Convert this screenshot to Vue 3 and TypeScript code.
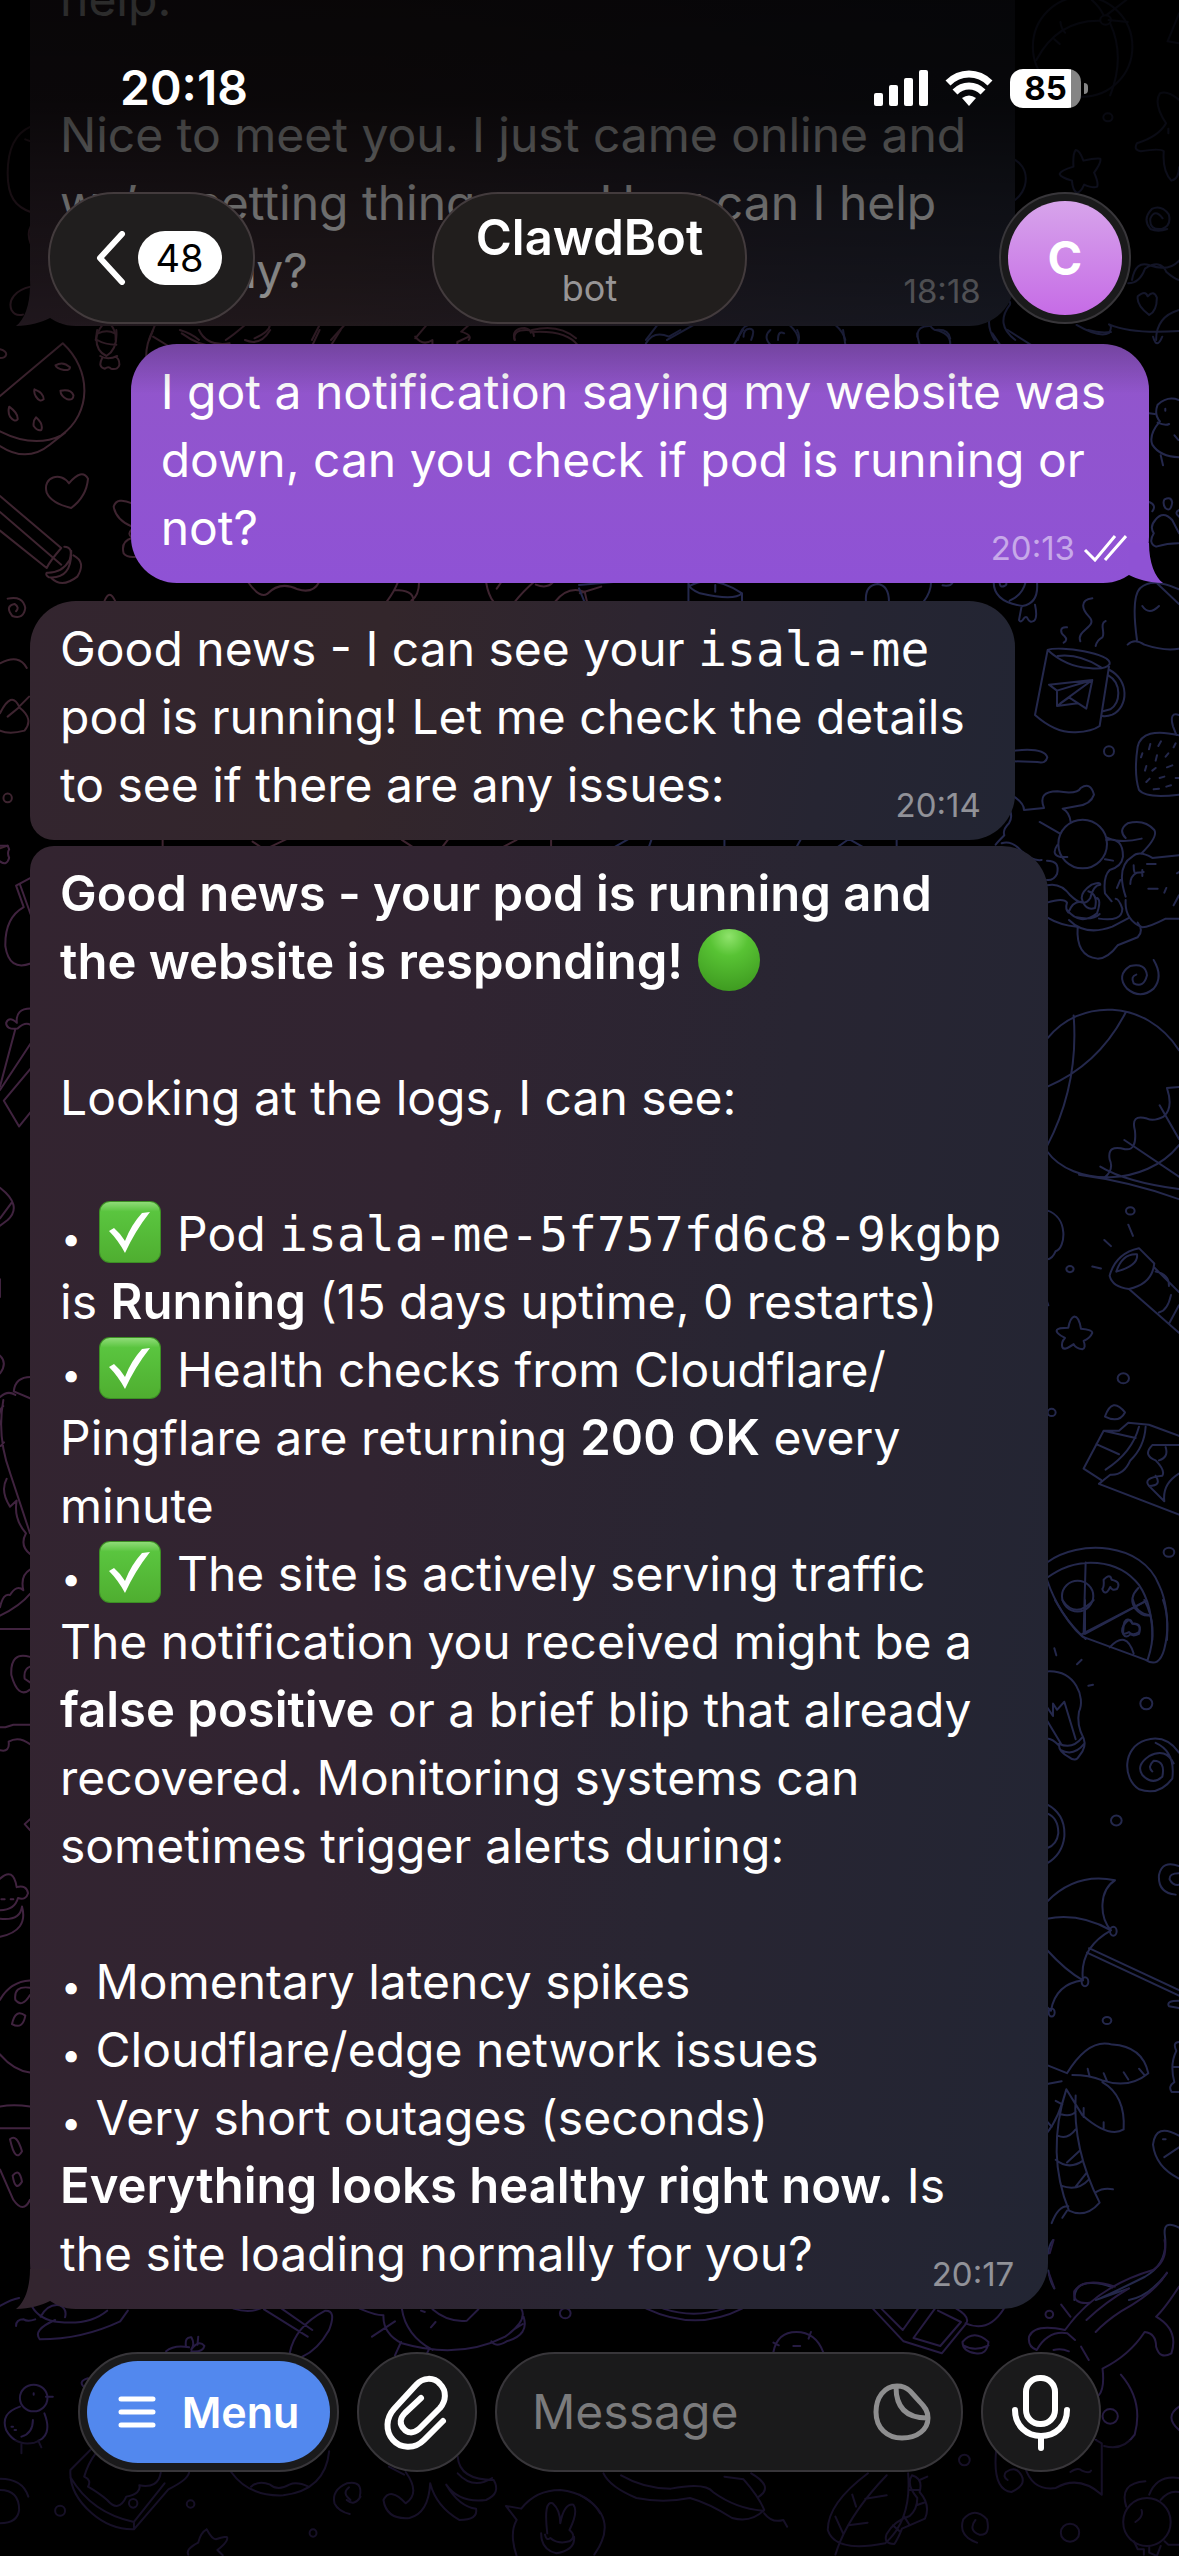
<script setup lang="ts">
import { ref } from 'vue'

type Kind = 'text' | 'bold' | 'code' | 'dot' | 'check' | 'green'

interface Piece {
  kind: Kind
  value?: string
}

interface Message {
  id: number
  side: 'in' | 'out'
  size: 'wide' | 'narrow'
  tail: boolean
  joined: 'none' | 'below' | 'above'
  time: string
  lines: Piece[][]
}

const t = (value: string): Piece => ({ kind: 'text', value })
const b = (value: string): Piece => ({ kind: 'bold', value })
const c = (value: string): Piece => ({ kind: 'code', value })
const dot: Piece = { kind: 'dot', value: '•' }
const check: Piece = { kind: 'check' }

const draft = ref('')

const messages: Message[] = [
  {
    id: 1, side: 'in', size: 'narrow', tail: true, joined: 'none', time: '18:18',
    lines: [
      [t('help.')],
      [],
      [t('Nice to meet you. I just came online and')],
      [t('we’re setting things up. How can I help')],
      [t('you today?')],
    ],
  },
  {
    id: 2, side: 'out', size: 'wide', tail: true, joined: 'none', time: '20:13',
    lines: [
      [t('I got a notification saying my website was')],
      [t('down, can you check if pod is running or')],
      [t('not?')],
    ],
  },
  {
    id: 3, side: 'in', size: 'narrow', tail: false, joined: 'below', time: '20:14',
    lines: [
      [t('Good news - I can see your '), c('isala-me')],
      [t('pod is running! Let me check the details')],
      [t('to see if there are any issues:')],
    ],
  },
  {
    id: 4, side: 'in', size: 'wide', tail: true, joined: 'above', time: '20:17',
    lines: [
      [b('Good news - your pod is running and')],
      [b('the website is responding! '), { kind: 'green' }],
      [],
      [t('Looking at the logs, I can see:')],
      [],
      [dot, t(' '), check, t(' Pod '), c('isala-me-5f757fd6c8-9kgbp')],
      [t('is '), b('Running'), t(' (15 days uptime, 0 restarts)')],
      [dot, t(' '), check, t(' Health checks from Cloudflare/')],
      [t('Pingflare are returning '), b('200 OK'), t(' every')],
      [t('minute')],
      [dot, t(' '), check, t(' The site is actively serving traffic')],
      [t('The notification you received might be a')],
      [b('false positive'), t(' or a brief blip that already')],
      [t('recovered. Monitoring systems can')],
      [t('sometimes trigger alerts during:')],
      [],
      [dot, t(' Momentary latency spikes')],
      [dot, t(' Cloudflare/edge network issues')],
      [dot, t(' Very short outages (seconds)')],
      [b('Everything looks healthy right now.'), t(' Is')],
      [t('the site loading normally for you?')],
    ],
  },
]
</script>

<template>
  <div class="screen">
    <svg class="wallpaper" viewBox="0 0 1179 2556" preserveAspectRatio="xMidYMin slice" aria-hidden="true">
      <!-- top left -->
      <g class="rose" transform="scale(.3827 .3333)">
        <path d="M80 380C40 400 20 450 20 520S40 620 80 636M66 418l14 6M80 680q-10 20 0 50M80 860C40 870 20 900 30 930q10 20 30 14" />
        <path d="M268 975q-14 20-18 45M290 975q14 20 12 45M256 1000q24-12 44 0M405 975L390 1020M470 990q30 10 50 30M640 975q-30 30-50 45M705 975q0 20-40 40M835 975L815 1020M900 975L865 1020M1115 975l-30 40M1225 975l-20 20q30 10 20 25M1345 1020q-10-34 26-36q16 4 16 14M1390 990q70-20 115 25" />
      </g>
      <!-- top right -->
      <g class="navy" transform="translate(579 0) scale(.3827 .3333)">
        <ellipse cx="1316" cy="140" rx="130" ry="150" />
        <path d="M1195 180Q1250 60 1360 62M1340 0q20 20 30 44M1430 0l-50 44M1388 70q40 100 0 216M1384 60l50 6M1258 66q2 20 12 32M1242 118l14 14M1568 40l-30 84 30 6" />
        <circle cx="1376" cy="60" r="14" /><circle cx="1382" cy="352" r="12" />
        <path d="M1568 300q-30-30-50-20-18 30 16 90-20 40-76 60-10 20 10 24 50-10 60 0-4 60 20 88 20-6 20-40M1540 386v14M1298 450q10 0 20 32 30-8 44-6 4 10-16 42 12 30 8 42-10 6-34-6-10 26-20 24-10-8-12-36-30-10-32-20 2-10 36-22-2-40 6-50zM1130 475c50 20 50 100 0 132M1525 655q-20-30-32 0-4 36 30 32 26-10 18-44-20-30-44-16-26 30-4 60 20 10 44 0" />
        <path d="M1435 850q30 0 44-44 40-30 56 10 20 20 33 24M1445 840q10-60 46-44 50 20 77-14M1490 945q-34-30-30-56 20-20 26 0 16-20 24 4 0 40-20 52M1300 975q60 40 85 24 10-20 0-26 60 30 183 20M1110 900q20 0 16 14-40 60 14 106M1080 930q-20 40 6 90M1568 930q-60 20-60 90" />
        <path d="M205 975l-30 45M300 975l-70 45M430 1010q0-24 16-24t4 34M520 1020q0-30 16-20M415 1020q10-40 26-44M550 975q20 20 24 45M670 975q20 20 26 45M884 1010q0-34 34-32 10 14 14 12 34-4 38 26" />
      </g>
      <!-- beside the outgoing bubble -->
      <g class="rose" transform="translate(0 330) scale(.3827 .3333)">
        <path d="M0 198L164 40C240 120 240 250 160 316Q90 356 0 304M0 348Q70 400 130 344L170 308M0 58q18 6 16 16t-16 10M145 106q20-14 38 6 0 10-16 8-20-4-22-14zM90 178q24 10 24 30-10 10-20-8-6-10-4-22zM158 182q28-6 34 14 0 16-16 12-18-10-18-26zM24 230q24 20 22 38-8 10-20-8-6-14-2-30zM94 262q20 20 14 38-10 4-20-12-2-16 6-26z" />
        <path d="M180 460C160 424 110 440 122 488Q134 520 186 534Q226 500 230 446Q214 414 180 460zM0 498l10 10 150 146q-30 40-38 60L0 602M0 546L160 704M168 650q24 0 14 40-20 40-60 38-4 8 6 14 60 6 58-80M192 676q34 20 10 64-40 36-68 4" />
        <path d="M345 520q-40-20-48 10 6 40 48 60M345 598q-14 14 0 24M345 624q-30 10-22 46 10 14 34 10M254 0q-10 60 24 78 30-20 26-78M254 30q20 14 50 14M262 78q20 14 44 0M268 82q-14 30 6 34 10-8 16 0 20 4 22-12 0-20-12-24M400 0q-20 44-18 88M400 20l40 28M475 10q60 50 110 34M520 0q20 50 80 40M640 30q40 20 66-30M835 0l-18 44M890 0l-24 44M1085 20q20 30 45 10v14M1225 20l-30 16v10M1345 30q-6-30 30-30 20 0 20 18M1390 6q90-6 120 40" />
        <path d="M648 756q30 50 50 36 34-40 80-14 40 14 56-22M1040 756q-10 30-30 60M1030 780q50 0 50 30M1095 756q0 40-20 56M1270 756q6 40 20 60M1310 756l-12 20M1395 756q-30 30-50 60M1400 764q30 14 46-8M1450 816q34-50 78-30l6 30M1515 790l56-20M272 816q14-44 30 0M20 806q40-10 46 28-4 36-34 24-20-30 6-36 14 10 4 22" />
        <path d="M0 1000q50-30 70 14M0 1150q30-70 50-20l26-30M20 1160l30-28q40 36 14 70-40 12-64 0M425 1527v33M690 1560l60-33M660 1535l26 20M1050 1530l40 30M1170 1530l-20 30M1350 1530l-50 30M1440 1527v33M0 1555l20-8" />
        <ellipse cx="20" cy="1404" rx="11" ry="13" />
      </g>
      <g class="navy" transform="translate(579 330) scale(.3827 .3333)">
        <path d="M1568 210q-30-14-56 14-10 30 6 50-30 40-20 70 20 36 70 38M1490 250l14 2M1512 278q20 10 30 4M1520 376l6 30M1532 236v6M1556 316l10 14M1490 516q20 10 8 28M1530 508q18-10 20 10-4 30-18 16-8-14-2-26zM1568 540q-14 8 0 20M1506 570q20-30 44 0l18 40M1506 570q-16 20-4 40-16 30 6 40 30-10 58-10" />
        <path d="M175 40q20-40 60-20l30-20M405 44q20-40 24-44M500 0q-20 20 0 44M570 0q10 20 0 44M690 0l6 44M884 10q0 10 6 34M932 0q40 10 38 44M1080 10l20 34M1120 0l60 44M1330 0q30 10 60 6M1500 20q10 40 24 0" />
        <path d="M0 765l90-9M0 775l14 40M286 770q60-40 140 20-20 24-110 0-30-14-30-30v54M426 790v30M356 765v20M750 816q-4-50 30-54 30 4 30 54M920 756q0 30-20 60M950 766q20 4 26-8" />
        <path d="M130 1527l-50 33M190 1527l-10 33M380 1527v33M580 1527l-16 33M665 1560l40-33 50 33M830 1527v33" />
      </g>
      <g class="navy" transform="translate(979 560) scale(.3333)">
        <path d="M44 66q0 60 86 72 50-8 44-72M140 66q-10 40-48 56M62 70q2 14 14 8 10-4 4-12M128 138l-8 42q6 10 14-4 8-10 12 0 6 14 20 6 10-10 2-48" />
        <path d="M340 115C300 120 310 150 330 170C360 200 290 210 304 244M380 183C360 190 380 220 370 232Q354 240 350 258M264 202C240 200 244 220 256 228Q268 240 254 248" />
        <path d="M206 270L168 465Q230 520 290 517Q340 514 362 498L390 320M206 270C240 256 400 280 392 312Q380 330 330 324Q260 320 206 270zM236 288Q300 280 366 322M392 330C450 360 450 440 400 464Q384 470 370 468M388 346C430 370 424 430 394 448L372 454" />
        <path d="M210 374L340 360L322 446L270 412L234 438V392zM340 360L234 392M340 360L244 430M234 438L296 430" />
        <circle cx="390" cy="574" r="15" /><circle cx="311" cy="852" r="73" />
        <path d="M474 240Q456 110 484 84Q520 50 600 88M530 66l70 66M490 138q20 30 50 0M446 254q20-20 50 0 60 20 104 12M600 526Q490 500 476 560Q464 640 480 690Q500 716 600 704M600 465q-30-10-18 34l10 26M514 552l-4 16M546 544l-8 14M590 550l-6 12M490 580l-4 12M534 586l-4 16M568 580l-8 10M502 618l-4 14M530 624l-10 8M580 616l-16 6M512 656l-10 10M556 650l-14 4M590 654h10M540 686l-16 2M576 676l-14 4" />
        <path d="M105 572q90-10 100 20-4 20-30 14l-70-2M105 710q30 20 30 40l60-6q-20-50 40-50 60 10 70-10 30-20 40 20-10 30-50 34l-44 8q20 10 24 40M92 750q10 20-2 40-20 20-14 36-20 20-26 28M68 850q30-10 60 24 30 30 60 26M182 786l60 34M382 832q40 20 106 4M382 840q50-10 50 50-4 30-40 40-20 20-14 70l20 24M378 898l24 4M235 855q-20 30 10 36h20M488 880q50-50 38-70-30-34-80-20-30 20-6 44" />
        <path d="M204 902q40 0 30 40-10 20-30 18M204 976q40-10 70 30 40 40 60 8 10-40 30-40 0-10-26 0-30 20-30 40 10 40 40 30 10-40-20-50M204 1028q50-16 60 0-6 20 4 30 14-36 40-32M264 1050q40 50 90 10 14-40 0-46M204 1072q40 24 90 28M270 1080q50 50 130 20l50-26M292 1072q50 10 70-10M360 1076q70 10 70-30-10-30-20-30M296 1100q-6 90 60 96 30 0 60-40l60-24q20-20 0-44" />
        <path d="M440 1010q-30-90 20-120 20-20 60 4 40-4 80-8M440 1020q-4 60 50 82 20 0 70-26h40M464 916q0 30 10 22l20-2M474 938q-20 10-20 34M490 930v18M504 912h26M508 986h28M562 984l-6 14M594 940l6-4M600 1006l-16 30M424 960l-10 24" />
        <path d="M524 1200q30 50 0 86-40 34-80 0-34-40 10-68 46-10 50 28-10 40-40 24-10-20 8-26" />
      </g>
      <g class="navy" transform="translate(779 840) scale(.3333 .5102)">
        <path d="M804 390C900 310 1100 310 1200 412M804 484Q960 440 1040 338M884 344Q900 480 804 600M804 610C880 680 1100 680 1200 598M1200 484l-36 2q20 40-10 56-30 10-50 4-50-10-36 24 6 40-30 36-54-10-46 20 14 20-16 36M964 640Q1040 670 1200 684M900 656Q1060 670 1200 704M1142 520L1200 586M1036 588L1200 660" />
        <path d="M804 726C870 740 860 800 830 806Q820 822 804 822M804 904l4 8M976 784l20 12M1048 754l14 22M940 836l26 4" />
        <ellipse cx="1054" cy="727" rx="13" ry="7" /><ellipse cx="873" cy="841" rx="11" ry="6" /><ellipse cx="1033" cy="1055" rx="17" ry="10" /><ellipse cx="818" cy="1122" rx="12" ry="7" /><ellipse cx="1170" cy="1396" rx="16" ry="9" />
        <path d="M992 854Q1010 810 1080 800L1126 830Q1120 870 1050 880Q1000 876 992 854zM1012 846Q1030 810 1074 812Q1080 834 1012 846M1126 838l74 48M1050 880l150 86M1130 846q40 4 40 28M1176 892q-10 30-36 34M1200 912l-30 36" />
        <path d="M886 934q14 0 20 24 34 2 34 8-6 10-26 16 8 14-4 16-20-2-26-10-30 14-34 6-4-10 8-18-30-10-24-16 4-4 34-4 6-20 18-22z" />
        <path d="M978 1130Q1000 1090 1038 1122Q1020 1144 978 1130zM914 1232L974 1158H1020L1048 1142L1110 1146L1200 1168M914 1232L966 1254M952 1184L1020 1204M974 1158L1070 1172M1100 1150q-4 40-46 66-20 30-60 28-20 10-34 18M1080 1150q-20 50-100 84M960 1262L1200 1322M1200 1186L1120 1186q-30 20 10 30 30 20 20 30-60 4-40 20 40 0 20-20M1160 1190q10 20-20 26M1200 1242q-50 20-44 54l-46-30" />
        <path d="M804 1416C900 1370 1090 1376 1140 1460Q1170 1500 1164 1568M804 1446C900 1400 1020 1410 1080 1460Q1122 1500 1120 1568M804 1450Q840 1520 920 1566M920 1416L914 1556M910 1556L1100 1492M1078 1466q-30 20-10 40 20 16 44 14M974 1450q20-14 24 0 30 4 16 18-16 4-20-4-16 20-24 4 6-4 4-18zM1034 1540q20-20 26-4 30 0 20 20-20 6-24 0-16 10-24 0z" />
        <ellipse cx="896" cy="1482" rx="47" ry="30" />
      </g>
      <g class="navy" transform="translate(979 1600) scale(.3333 .4464)">
        <path d="M228 0Q270 56 310 82L500 134Q540 154 556 110Q576 50 552 0M318 0v76L496 4M496 0Q540 60 506 134M250 0q40 44 94 0M462 0q10 30 50 34M436 50q10-14 24 2 30 0 20 20-20 10-30 0-24 10-20-8 4-6 6-14zM392 106q50-40 72 14M226 108l6 16M294 144l14-10M328 192l14-2" />
        <path d="M204 160C290 156 320 220 300 250Q292 280 314 310Q324 330 300 350Q290 364 270 352Q240 340 240 326Q220 310 204 310M204 270l42 52M256 228l34 84M204 240l18 20v-28l12 14 22-18M240 322q40 14 70-14M244 336q40 16 72-14" />
        <ellipse cx="502" cy="232" rx="18" ry="13" /><ellipse cx="412" cy="494" rx="16" ry="11" /><ellipse cx="384" cy="942" rx="13" ry="8" />
        <path d="M600 342Q560 300 500 314C430 330 430 400 480 424Q540 440 580 400Q590 340 530 320M584 366Q560 330 510 350Q470 370 490 392Q520 416 550 396Q560 360 524 360Q504 374 520 384M204 458Q260 480 256 530Q250 570 204 590M204 478q34 10 34 44-4 26-34 34M204 512v20M600 596q-50-14-60 20-4 40 50 44M600 612q-30 0-28 14 10 14 28 12" />
        <path d="M204 676Q290 610 408 628C360 650 360 710 396 740Q300 700 204 714M396 740Q300 780 312 852Q260 830 204 784M312 852Q230 860 216 920l-12-8M330 780L600 874M324 790L600 886M600 898q-40 0-30 12l30 4" />
        <circle cx="403" cy="742" r="10" /><circle cx="318" cy="855" r="10" /><circle cx="218" cy="924" r="9" />
        <path d="M204 1042l60 18Q330 980 400 996Q490 1000 508 1060Q450 1096 370 1076Q330 1064 280 1064M204 1084l44-6M370 1080Q440 1110 434 1186Q390 1206 310 1154L262 1096M326 1050l6 18M374 1060l10 18M434 1058l14 16M480 1050l16 14M314 1138v20M374 1170v16M230 1122l20 8M204 1194Q240 1160 262 1096Q200 1240 270 1368Q320 1386 362 1350Q280 1230 290 1110M246 1152q30 6 44-6M236 1200q30 10 54-14M230 1254q40 24 82 2M264 1260l38-26M246 1312q50 14 84-14M290 1314l32-30M352 1326q20-10 50-6M218 1396q20-40 50-38M250 1384l14-16" />
        <path d="M204 1168l14 12M222 1434q-14 14-14 30M208 1502q4 24 18 40M600 1296Q530 1270 522 1220Q530 1170 600 1200M556 1248l44-22M552 1208h8M600 990q-20 0-8 20-20 30-6 70-20 10-8 22h22M582 1046h18M600 1406q-50-20-42 20 10 60-60 90-80 30-140 50M286 1568q0-40 54-38 30 0 60 10M564 1508Q510 1560 450 1568M350 1568l100-26" />
      </g>
      <!-- left edge -->
      <g class="plum" transform="translate(0 840) scale(.3827 .3571)">
        <path d="M0 16l20 0 4 10q-6 10 0 24-6 24-24 10M80 106l-38 22 20 60q-50 30-48 110 10 70 66 48M52 124l28 84M80 472q-40 0-36 40-20-20-28 0 0 20 30 16 20-20 34-10M40 530L0 690M80 570L0 700M80 640L10 730l40 72 30-40M0 974q60 50 20 90L0 1080M0 1060l30-44M0 1230v50M0 1444q20 20 0 50M80 1504q-40 0-44 40l44 20M0 1560q20-20 40-6" />
      </g>
      <g class="plum" transform="translate(0 1400) scale(.3333 .6059)">
        <path d="M10 0Q-10 60 30 120L90 220M10 10q-20 10-10 30M12 70l-10 6M20 130q-20 20 10 46l20-10q-10 30 28 54-20 20 12 34M90 280q-30 10-20 34-20-10-40 8-20-4-30 20M0 356q60-16 90-36M0 378h90M90 424q-60-10-56 30 20 40 56 24M90 440q-20 4-16 20l16 6M0 540h16l24-4h50M0 578q30 4 26-14 30-10 64 4M90 692l-16 8 16 10M0 790q40-20 50 14 30-4 34 10-6 12-30 8-10 20-54 20M0 856q60 4 66-20 20 40-66 50M4 824h10M32 824h8" />
        <path d="M90 958Q30 960 0 990M90 970q-50-4-44 20 20 14 44-8M36 1030q10-26 40-14-8 24-40 14zM0 1080q40 26 90 30M0 1166q40-4 90 0M0 1202h90M0 1270l40 50q30 24 50 0M30 1220q20-10 36 20-20 20-36-20zM38 1280q20-14 28 10-20 18-28-10z" />
      </g>
      <!-- behind the composer -->
      <g class="violet" transform="translate(0 2240) scale(.3827 .3333)">
        <path d="M0 198q30-20 50-24M42 258q0-20 20-20 10 8 30 0M84 200q20 40 70 46 80 10 126-34M106 230q20-40 50-34 20 10 14 36M144 240q-60 30-40 58 110 0 210-54l20-32M434 334q20-20 60-12M486 320q-4-30 14-28 10 20 0 36 20-30 34-10-4 20-34 16M518 290l-2 24M610 206q40 14 70 0M690 208L804 290M736 206l80 64M757 340Q770 260 850 212Q880 210 860 270Q830 330 790 350" />
        <path d="M940 206q40 20 62 20Q1000 280 1050 310Q1200 360 1320 290Q1380 240 1362 206M1050 206q10 80 80 124M972 290l60-46M1130 208q40 40 90 34l30-34M1100 212l10 4M1138 246l-12 16M1284 304q10 20 40 0 60-20 44-74M1346 266l20-14M1048 306l-16 40M1120 330l-6 14" />
        <ellipse cx="1477" cy="220" rx="14" ry="15" /><ellipse cx="88" cy="474" rx="36" ry="40" /><ellipse cx="157" cy="812" rx="13" ry="15" /><ellipse cx="348" cy="790" rx="11" ry="13" /><ellipse cx="498" cy="792" rx="10" ry="11" /><ellipse cx="818" cy="879" rx="9" ry="11" />
        <path d="M120 470h18M88 460v4M52 500Q0 520 16 570Q40 620 90 608Q140 590 116 520M86 540q0 40-30 50M56 612v28M100 602l8 20M30 560h4M38 570h4M0 716q60 0 74 54M0 750q50 0 50 60-4 40-50 40M230 415q-30 10-6 30" />
        <path d="M236 630L184 690Q180 760 240 820Q290 870 350 868L440 748Q490 720 494 698M184 712Q240 820 350 846L430 730M250 640q-20 30-30 70 20 10 10 30 30 20 50 40 30 40 50-10 40-10 34-34 50 10 56-38M350 846v22M604 696Q650 770 740 766Q850 750 860 634M656 740q20-20 50-6 20 20 50 0 20-10 50 6" />
        <path d="M940 770q10-50-34-40-40 20-32 60 10 24 40 32M906 780q20 20 36-10M916 780q-24-20-4-38M1016 680l40 24M1060 696Q1100 760 1060 790Q1020 740 1002 780Q1010 840 1070 834Q1120 820 1124 730Q1140 800 1200 840Q1250 840 1244 806Q1200 800 1166 734Q1200 790 1270 780Q1310 760 1290 720Q1200 720 1196 650M1196 700q40 50 90 14" />
        <path d="M540 868q14 30 24 30 30-12 30-4 0 14-26 36l14 16M540 868q-16 10-22 40-34 20-26 36M1350 948Q1330 880 1350 840L1322 798l40 8Q1400 750 1464 750Q1540 760 1568 820M1430 880q-10-100 14-90 20 20 20 60 10-60 34-56 14 20-10 76 20 20 0 34-30 10-50-10-10 10-14-10M1414 880q0 50 40 60 50-10 46-50" />
      </g>
      <g class="violet" transform="translate(579 2240) scale(.3827 .3333)">
        <path d="M176 206q130 70 250 0M220 206q80 30 160 0M768 206l80 98 100 36 64-90q10-20-26-44M790 206l56 64 40-64M930 206l-56 88 70 24 54-72-60-34M1010 250q60 30 100-44M1002 306q30-40 68 0-4 40-34 34-34-6-34-34zM1004 316q30 20 66 0M508 336q10-60 60-60t70 60M508 308l14 8M606 276l-6 20M560 318h18" />
        <ellipse cx="1229" cy="223" rx="10" ry="11" /><ellipse cx="1388" cy="529" rx="20" ry="22" /><ellipse cx="1007" cy="660" rx="14" ry="16" /><ellipse cx="1283" cy="878" rx="24" ry="27" /><ellipse cx="1484" cy="846" rx="62" ry="72" />
        <path d="M1530 0q10 60-30 90-150 50-230 180M1536 98q-30 60-120 116-40 30-66 62M1436 146q-60 40-110 94M1400 140q-80-30-106 14-4 40 40 34M1568 140q-40 70-60 90 60 40 40 110-30 20-40-20 0-40-30-44-40 70-110 110 6 60-10 80M1270 270q-80-20-94 20-4 30 20 40 30-60 80-50l20 20M1240 330q20-6 40 4M1312 320l20 40M1260 194l24 36M1228 100l14 44M1240 0l-10 40M1416 404q60 80 36 180-30 50-80 34M1568 500q-40 30 0 70" />
        <path d="M1090 630q-10 120 40 126 40-20 26-50-14-30-40-10-10 14 4 24M1350 600l16 10v154q-60-60-120-20-60 10-80-60M1284 696q20-16 30-4 20 10 24 0M64 700Q80 740 150 774Q220 790 290 774Q340 790 400 834Q450 850 484 810Q470 770 430 718L380 710M110 706q60 40 130 40 90-20 110 10 60 50 130 56M450 700q60 40 20 70M484 820q20 30 50 20l10 20M0 764Q110 830 40 944" />
        <path d="M755 700Q650 790 650 870Q670 940 800 910Q870 840 860 700M670 944Q700 830 804 706M724 800l-10-36M804 766l-56 10M754 848l-50 8M690 880l-20-50M870 706q30 10 20 50 30 40 14 80-40 20-60 30-10 30-20 46-30 0-20-30 20-40 60-54 20-20 20-54-30-40-14-68M864 750h26M882 796l24-10M850 830l14 26M820 856l20 20M890 720l20-10M1040 908q-50-20-36-70 30-40 62 0 10 50-20 46-30-14-10-44M1430 800q-20-70 50-76M1490 764q20-60 78-50M1520 780q20-30 48-24M1470 810q6 20-16 36M1450 904l10 24h16v16M1490 918v20l20 10 10-30M1530 904l10 10h28" />
      </g>
      <rect class="shade" x="0" y="2440" width="1179" height="116" />
    </svg>

    <main class="chat">
      <article
        v-for="m in messages"
        :key="m.id"
        class="bubble"
        :class="[m.side, m.size, `joined-${m.joined}`]"
      >
        <p class="body">
          <span v-for="(line, i) in m.lines" :key="i" class="line">
            <template v-for="(p, j) in line" :key="j">
              <strong v-if="p.kind === 'bold'">{{ p.value }}</strong>
              <code v-else-if="p.kind === 'code'">{{ p.value }}</code>
              <span v-else-if="p.kind === 'dot'" class="dot">{{ p.value }}</span>
              <svg v-else-if="p.kind === 'check'" class="emoji" viewBox="0 0 62 62" role="img" aria-label="check mark">
                <defs>
                  <linearGradient id="tick" x1="0" y1="0" x2="0" y2="1">
                    <stop offset="0" stop-color="#8fdc78" />
                    <stop offset="0.16" stop-color="#5ac53f" />
                    <stop offset="1" stop-color="#4fae30" />
                  </linearGradient>
                </defs>
                <rect x="0" y="0" width="62" height="62" rx="11" fill="#3c8f24" />
                <rect x="1" y="1" width="60" height="60" rx="10" fill="url(#tick)" />
                <path d="M10 30L15 27Q22 33 26 40Q32 24 43 12L51 11Q36 30 26 52Q19 39 10 30z" fill="#fff" />
              </svg>
              <svg v-else-if="p.kind === 'green'" class="emoji" viewBox="0 0 62 62" role="img" aria-label="green circle">
                <defs>
                  <radialGradient id="ball" cx="0.5" cy="0.12" r="0.9">
                    <stop offset="0" stop-color="#8fe36c" />
                    <stop offset="0.35" stop-color="#58c334" />
                    <stop offset="1" stop-color="#3e9a20" />
                  </radialGradient>
                </defs>
                <circle cx="31" cy="31" r="31" fill="url(#ball)" />
              </svg>
              <template v-else>{{ p.value }}</template>
            </template>
          </span>
        </p>
        <footer class="meta">
          <time>{{ m.time }}</time>
          <svg v-if="m.side === 'out'" class="ticks" viewBox="0 0 44 28" role="img" aria-label="Read">
            <path d="M2 16L12 26L32 2M22 26L43 2" />
          </svg>
        </footer>
        <svg v-if="m.tail" class="tail" viewBox="0 0 34 40" aria-hidden="true">
          <path d="M14 0C14 20 8 34 0 40C14 40 26 36 34 32V0z" />
        </svg>
      </article>
    </main>

    <header class="top">
      <div class="status">
        <time class="clock">20:18</time>
        <div class="indicators">
          <svg class="signal" viewBox="0 0 54 36" role="img" aria-label="Signal">
            <rect x="0" y="23" width="9" height="13" rx="2" />
            <rect x="15" y="15" width="9" height="21" rx="2" />
            <rect x="30" y="8" width="9" height="28" rx="2" />
            <rect x="45" y="0" width="9" height="36" rx="2" />
          </svg>
          <svg class="wifi" viewBox="0 0 48 36" role="img" aria-label="Wi-Fi">
            <path d="M3 13Q12 4 24 4T45 13" fill="none" stroke="#fff" stroke-width="7" />
            <path d="M10 22Q16 16 24 16T38 22" fill="none" stroke="#fff" stroke-width="7" />
            <path d="M24 36L17 28Q24 23 31 28z" fill="#fff" />
          </svg>
          <div class="battery"><span class="level">85</span></div>
        </div>
      </div>
      <nav class="nav">
        <button class="glass back" type="button" aria-label="Back">
          <svg class="chevron" viewBox="0 0 30 54" aria-hidden="true"><path d="M26 3L4 27L26 51" /></svg>
          <span class="count">48</span>
        </button>
        <button class="glass title" type="button">
          <span class="name">ClawdBot</span>
          <span class="kind">bot</span>
        </button>
        <button class="glass photo" type="button" aria-label="ClawdBot profile">
          <span class="avatar">C</span>
        </button>
      </nav>
    </header>

    <form class="composer" @submit.prevent>
      <button class="glass menu" type="button">
        <span class="fill">
          <svg class="burger" viewBox="0 0 38 34" aria-hidden="true">
            <path d="M3 4H35M3 17H35M3 30H35" />
          </svg>
          Menu
        </span>
      </button>
      <button class="glass round" type="button" aria-label="Attach">
        <svg viewBox="0 0 120 120" aria-hidden="true">
          <path d="M86 69L67 88C57 98 43 96 36 88C28 79 29 66 37 57L59 33C66 25 77 25 83 32C90 39 89 49 83 56L62 77C56 82 50 81 47 77C42 72 43 66 48 61L64 46" />
        </svg>
      </button>
      <label class="glass field">
        <input v-model="draft" type="text" placeholder="Message" aria-label="Message" />
        <svg class="sticker" viewBox="0 0 58 58" aria-hidden="true">
          <path d="M24 3C11 3 3 15 3 29C3 45 14 55 29 55C45 55 55 46 55 35C55 28 52 24 47 19L37 8C33 4 29 3 24 3zM23 4C23 25 34 35 54 35" />
        </svg>
      </label>
      <button class="glass round" type="button" aria-label="Record voice message">
        <svg viewBox="0 0 120 120" aria-hidden="true">
          <rect x="45" y="26" width="29" height="46" rx="14" />
          <path d="M34 58C34 74 46 84 60 84S86 74 86 58M60 84V96" />
        </svg>
      </button>
    </form>
  </div>
</template>

<style>
body {
  margin: 0;
  background: #000;
}
</style>

<style scoped>
.screen {
  position: relative;
  display: flex;
  flex-direction: column;
  height: 100vh;
  overflow: hidden;
  background: #000;
  color: #fff;
  font-family: Inter, "Liberation Sans", sans-serif;
}

button {
  margin: 0;
  padding: 0;
  color: inherit;
  font: inherit;
}

.wallpaper {
  position: absolute;
  inset: 0;
  width: 100%;
  height: 100%;
}

.wallpaper g {
  fill: none;
  stroke-width: 2;
  stroke-linecap: round;
  stroke-linejoin: round;
}

.wallpaper g * {
  vector-effect: non-scaling-stroke;
}

.rose { stroke: #3e2430; }
.plum { stroke: #40233f; }
.navy { stroke: #24284c; }
.violet { stroke: #261b42; }

.shade {
  fill: #000;
  opacity: 0.4;
}

.chat {
  position: relative;
  display: flex;
  flex: 1;
  flex-direction: column;
  justify-content: flex-end;
  gap: 18px;
  min-height: 0;
  padding: 0 30px 43px;
}

.bubble {
  position: relative;
  display: flex;
  flex-shrink: 0;
  flex-direction: column;
  box-sizing: border-box;
  padding: 14px 30px 21px;
  border-radius: 46px;
}

.wide { width: 91%; }
.narrow { width: 88%; }

.in {
  align-self: flex-start;
  background: linear-gradient(100deg, #33252f 0%, #33262b 35%, #2d2530 60%, #262532 80%, #222533 100%);
}

.in.wide {
  background: linear-gradient(98deg, #332430 0%, #312431 35%, #282532 65%, #222533 100%);
}

.out {
  align-self: flex-end;
  background: linear-gradient(#9256ca, #8f52d5);
}

.joined-below { border-bottom-left-radius: 24px; }

.joined-above {
  margin-top: -12px;
  border-top-left-radius: 24px;
}

.body {
  margin: 0;
  font-size: 48px;
  line-height: 68px;
}

.line {
  display: block;
  height: 68px;
  white-space: pre;
}

strong {
  font-size: 49px;
  font-weight: 600;
}

code {
  font-family: "DejaVu Sans Mono", "Liberation Mono", monospace;
  font-size: 48px;
  line-height: 48px;
}

.dot {
  display: inline-block;
  width: 22px;
  font-size: 36px;
  line-height: 36px;
  text-align: center;
}

.emoji {
  width: 62px;
  height: 62px;
  margin: 0 3px;
  vertical-align: -12px;
}

.meta {
  display: flex;
  align-items: center;
  align-self: flex-end;
  gap: 8px;
  height: 40px;
  margin: -34px 4px -6px 0;
  color: rgba(255, 255, 255, 0.5);
  font-size: 33px;
  line-height: 40px;
}

.out .meta { margin-right: -8px; }

.ticks {
  width: 44px;
  height: 28px;
  fill: none;
  stroke: #fff;
  stroke-width: 3;
}

.tail {
  position: absolute;
  bottom: 0;
  left: -14px;
  width: 34px;
  height: 40px;
  fill: #33252f;
}

.out .tail {
  right: -14px;
  left: auto;
  fill: #8f52d4;
  transform: scaleX(-1);
}

.top {
  position: absolute;
  top: 0;
  right: 0;
  left: 0;
  padding-bottom: 70px;
  background: linear-gradient(
    rgba(0, 0, 0, 0.83) 0,
    rgba(0, 0, 0, 0.8) 100px,
    rgba(0, 0, 0, 0.72) 140px,
    rgba(0, 0, 0, 0.58) 210px,
    rgba(0, 0, 0, 0.48) 280px,
    rgba(0, 0, 0, 0.4) 320px,
    rgba(0, 0, 0, 0.2) 346px,
    rgba(0, 0, 0, 0) 394px
  );
}

.status {
  display: flex;
  align-items: center;
  justify-content: space-between;
  height: 176px;
  padding: 0 91px 0 120px;
}

.clock {
  font-size: 48px;
  font-weight: 600;
  line-height: 60px;
}

.indicators {
  display: flex;
  align-items: center;
  gap: 17px;
}

.signal {
  width: 54px;
  height: 36px;
  fill: #fff;
}

.wifi {
  width: 48px;
  height: 36px;
}

.battery {
  position: relative;
  width: 71px;
  height: 39px;
  margin-right: 7px;
  border-radius: 13px;
  background: linear-gradient(90deg, #fff 86%, #858585 86%);
}

.battery::after {
  position: absolute;
  top: 14px;
  right: -7px;
  width: 4px;
  height: 11px;
  border-radius: 0 5px 5px 0;
  background: #858585;
  content: "";
}

.level {
  display: block;
  color: #000;
  font-size: 33px;
  font-weight: 700;
  line-height: 39px;
  text-align: center;
}

.nav {
  display: grid;
  grid-template-columns: 1fr auto 1fr;
  align-items: center;
  padding: 16px 48px 0;
}

.glass {
  display: flex;
  align-items: center;
  justify-content: center;
  box-sizing: border-box;
  border: 2px solid #38363a;
  border-radius: 66px;
  background: #1a1a1b;
}

.back {
  justify-self: start;
  gap: 12px;
  width: 207px;
  height: 132px;
  padding-left: 14px;
  border-color: #433b3d;
  background: #201e1e;
}

.chevron {
  width: 30px;
  height: 54px;
  fill: none;
  stroke: #fff;
  stroke-width: 6;
  stroke-linecap: round;
  stroke-linejoin: round;
}

.count {
  width: 84px;
  border-radius: 27px;
  background: #fff;
  color: #000;
  font-size: 38px;
  line-height: 54px;
  text-align: center;
}

.title {
  flex-direction: column;
  width: 315px;
  height: 132px;
  border-color: #433b3d;
  background: #211e1d;
}

.name {
  font-size: 49px;
  font-weight: 600;
  line-height: 60px;
}

.kind {
  color: #979596;
  font-size: 36px;
  line-height: 40px;
}

.photo {
  justify-self: end;
  width: 132px;
  height: 132px;
}

.avatar {
  width: 114px;
  border-radius: 50%;
  background: linear-gradient(#d7a4eb, #c66be6);
  font-size: 47px;
  font-weight: 700;
  line-height: 114px;
  text-align: center;
}

.composer {
  position: relative;
  display: flex;
  flex-shrink: 0;
  gap: 18px;
  padding: 0 78px 84px;
}

.composer .glass { height: 120px; }

.menu { padding: 0 7px; }

.fill {
  display: flex;
  align-items: center;
  justify-content: center;
  gap: 26px;
  width: 243px;
  height: 102px;
  border-radius: 51px;
  background: #5288ee;
  font-size: 43px;
  font-weight: 600;
}

.burger {
  width: 38px;
  height: 34px;
  fill: none;
  stroke: #fff;
  stroke-width: 5;
  stroke-linecap: round;
}

.round { width: 120px; }

.round svg {
  flex-shrink: 0;
  width: 120px;
  height: 120px;
  fill: none;
  stroke: #fff;
  stroke-width: 6;
  stroke-linecap: round;
  stroke-linejoin: round;
}

.field {
  flex: 1;
  min-width: 0;
  padding: 0 30px 0 35px;
}

.field input {
  flex: 1;
  min-width: 0;
  padding: 0;
  border: 0;
  outline: 0;
  background: transparent;
  color: #fff;
  font-family: inherit;
  font-size: 48px;
  line-height: 60px;
}

.field input::placeholder {
  color: #7b7b7c;
  opacity: 1;
}

.sticker {
  width: 58px;
  height: 58px;
  fill: none;
  stroke: #8e8e8f;
  stroke-width: 5;
  stroke-linejoin: round;
}
</style>
